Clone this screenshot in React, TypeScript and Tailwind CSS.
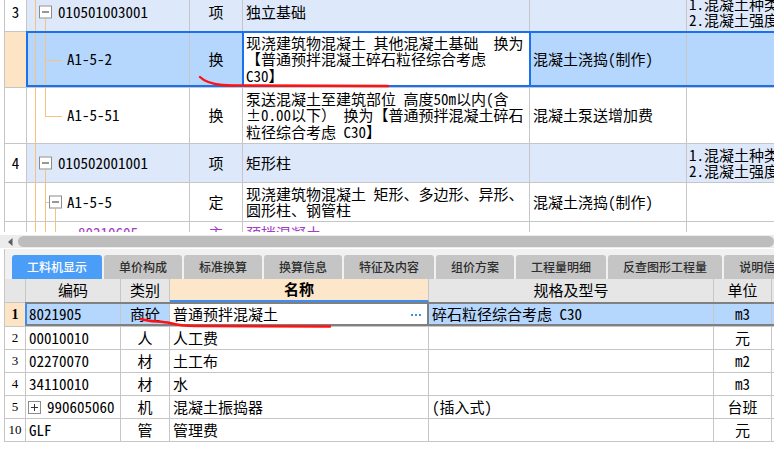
import { memo, ReactNode } from "react";

const FONT = "font-[family-name:'Noto_Sans_Mono_CJK_SC','Noto_Sans_CJK_SC',sans-serif]";
const GRID = "border-[#c6c6c6]";
const CELL = `shrink-0 h-full border-r ${GRID}`;
const SEL = "bg-[#b5d6fd]";
const ITEM = "bg-[#dde9fb]";
const PEACH = "bg-[#fde4c4]";

function Line({ className }: { className: string }) {
    return <span className={`absolute w-px bg-[#f6c27e] ${className}`} />;
}

function Toggle({ className, plus }: { className: string; plus?: boolean }) {
    return (
        <span className={`absolute top-1/2 -translate-y-1/2 w-[13px] h-[13px] border border-[#8c8c8c] bg-white flex items-center justify-center ${className}`}>
            <span className="w-[7px] h-px bg-[#333]" />
            {plus && <span className="absolute w-px h-[7px] bg-[#333]" />}
        </span>
    );
}

type TopRowProps = {
    height: string;
    num?: string;
    tree: ReactNode;
    code: string;
    codePad: string;
    type: string;
    name: ReactNode;
    work?: string;
    feature?: ReactNode;
    kind?: "item" | "selected" | "sub";
    purple?: boolean;
};

function TopRow({ height, num, tree, code, codePad, type, name, work, feature, kind, purple }: TopRowProps) {
    const bg = kind === "item" ? ITEM : kind === "selected" ? SEL : "bg-white";
    const text = purple ? "text-[#a63cc4]" : "text-black";

    return (
        <div className={`relative flex shrink-0 border-b ${GRID} ${height} ${text}`}>
            <div className={`${CELL} w-[22px] flex items-center justify-center ${kind === "selected" ? PEACH : "bg-white"}`}>
                {num}
            </div>
            <div className={`${CELL} w-[163px] relative flex items-center ${bg} ${codePad}`}>
                {tree}
                <span className="relative whitespace-nowrap">{code}</span>
            </div>
            <div className={`${CELL} w-[53px] flex items-center justify-center ${bg}`}>{type}</div>
            <div className={`${CELL} w-[287px] flex items-center pl-[3px] leading-[16.5px] ${kind === "selected" ? "bg-white" : bg}`}>
                <div>{name}</div>
            </div>
            <div className={`${CELL} w-[157px] flex items-center pl-[3px] ${bg}`}>{work}</div>
            <div className={`${CELL} w-[200px] flex items-center pl-[2px] leading-[16px] whitespace-nowrap ${bg}`}>
                <div>{feature}</div>
            </div>

            {kind === "selected" && (
                <>
                    <div className="absolute left-[21px] right-0 -top-px bottom-0 border-2 border-[#1b70ee] pointer-events-none" />
                    <div className="absolute left-[237px] w-[289px] -top-px bottom-0 border-2 border-[#1b70ee] pointer-events-none" />
                </>
            )}
        </div>
    );
}

const feature = (
    <>
        1.混凝土种类<br />2.混凝土强度等级
    </>
);

function TopGrid() {
    return (
        <div className="h-[232px] overflow-hidden">
            <div className={`ml-[4px] border-l ${GRID} -mt-[7px] flex flex-col w-max`}>
                <TopRow
                    height="h-[39px]"
                    num="3"
                    kind="item"
                    codePad="pl-[31px]"
                    tree={(
                        <>
                            <Line className="left-[8px] top-0 bottom-0" />
                            <Line className="left-[18px] top-1/2 bottom-0" />
                            <Toggle className="left-[12px]" />
                        </>
                    )}
                    code="010501003001"
                    type="项"
                    name="独立基础"
                    feature={feature}
                />
                <TopRow
                    height="h-[56px]"
                    kind="selected"
                    codePad="pl-[40px]"
                    tree={(
                        <>
                            <Line className="left-[8px] top-0 bottom-0" />
                            <Line className="left-[18px] top-0 bottom-0" />
                            <span className="absolute left-[18px] w-[17px] h-px top-1/2 bg-[#f6c27e]" />
                        </>
                    )}
                    code="A1-5-2"
                    type="换"
                    name={(
                        <>
                            现浇建筑物混凝土 其他混凝土基础　换为<br />
                            【普通预拌混凝土碎石粒径综合考虑<br />
                            C30】
                        </>
                    )}
                    work="混凝土浇捣(制作)"
                />
                <TopRow
                    height="h-[56px]"
                    kind="sub"
                    codePad="pl-[40px]"
                    tree={(
                        <>
                            <Line className="left-[8px] top-0 bottom-0" />
                            <Line className="left-[18px] top-0 bottom-1/2" />
                            <span className="absolute left-[18px] w-[17px] h-px top-1/2 bg-[#f6c27e]" />
                        </>
                    )}
                    code="A1-5-51"
                    type="换"
                    name={(
                        <>
                            泵送混凝土至建筑部位 高度50m以内(含<br />
                            ±0.00以下）　换为【普通预拌混凝土碎石<br />
                            粒径综合考虑 C30】
                        </>
                    )}
                    work="混凝土泵送增加费"
                />
                <TopRow
                    height="h-[39px]"
                    num="4"
                    kind="item"
                    codePad="pl-[31px]"
                    tree={(
                        <>
                            <Line className="left-[8px] top-0 bottom-0" />
                            <Line className="left-[18px] top-1/2 bottom-0" />
                            <Toggle className="left-[12px]" />
                        </>
                    )}
                    code="010502001001"
                    type="项"
                    name="矩形柱"
                    feature={feature}
                />
                <TopRow
                    height="h-[39px]"
                    kind="sub"
                    codePad="pl-[40px]"
                    tree={(
                        <>
                            <Line className="left-[8px] top-0 bottom-0" />
                            <Line className="left-[18px] top-0 bottom-0" />
                            <Line className="left-[28px] top-1/2 bottom-0" />
                            <span className="absolute left-[18px] w-[5px] h-px top-1/2 bg-[#f6c27e]" />
                            <Toggle className="left-[22px]" />
                        </>
                    )}
                    code="A1-5-5"
                    type="定"
                    name={(
                        <>
                            现浇建筑物混凝土 矩形、多边形、异形、<br />
                            圆形柱、钢管柱
                        </>
                    )}
                    work="混凝土浇捣(制作)"
                />
                <TopRow
                    height="h-[24px]"
                    kind="sub"
                    purple
                    codePad="pl-[51px]"
                    tree={(
                        <>
                            <Line className="left-[8px] top-0 bottom-0" />
                            <Line className="left-[18px] top-0 bottom-0" />
                            <Line className="left-[28px] top-0 bottom-0" />
                        </>
                    )}
                    code="80210605"
                    type="主"
                    name="预拌混凝土"
                />
            </div>
        </div>
    );
}

const tabs = ["工料机显示", "单价构成", "标准换算", "换算信息", "特征及内容", "组价方案", "工程量明细", "反查图形工程量", "说明信息"];

function TabStrip() {
    return (
        <>
            <div className="h-[16px] pt-[3px] bg-white">
                <div className="h-[13px] bg-[#ececec] flex items-center">
                    <svg className="ml-[8px] shrink-0" width="5" height="8" viewBox="0 0 5 8">
                        <path d="M4.5 0 L0 4 L4.5 8 Z" fill="#5c5c5c" />
                    </svg>
                    <div className="ml-[5px] h-[11px] flex-1 rounded-full bg-[#bdbdbd]" />
                </div>
            </div>
            <div className="h-[31px] bg-white pt-px">
                <div className={`h-full ml-[4px] border-l ${GRID} bg-[#f1f1f1] pl-[7px] flex items-end gap-[2px] overflow-hidden`}>
                    {tabs.map((tab, index) => (
                        <div
                            key={tab}
                            className={`shrink-0 h-[24px] px-[15px] rounded-t-[3px] flex items-center text-[12px] font-medium font-['Noto_Sans_CJK_SC',sans-serif] ${index === 0 ? "bg-[#4b9ef8] text-white" : "bg-[#c5c5c5] text-[#2e2e2e]"}`}
                        >
                            {tab}
                        </div>
                    ))}
                </div>
            </div>
        </>
    );
}

const materials = [
    { n: "2", code: "00010010", type: "人", name: "人工费", spec: "", unit: "元" },
    { n: "3", code: "02270070", type: "材", name: "土工布", spec: "", unit: "m2" },
    { n: "4", code: "34110010", type: "材", name: "水", spec: "", unit: "m3" },
    { n: "5", code: "990605060", type: "机", name: "混凝土振捣器", spec: "(插入式)", unit: "台班", expand: true },
    { n: "10", code: "GLF", type: "管", name: "管理费", spec: "", unit: "元" }
];

function MaterialGrid() {
    const cell = `shrink-0 h-full border-r ${GRID} flex items-center`;

    return (
        <div className={`ml-[4px] border-l ${GRID} flex flex-col w-max`}>
            <div className={`flex h-[24px] border-b ${GRID} bg-[#e6e6e6]`}>
                <div className={`${cell} w-[21px]`} />
                <div className={`${cell} w-[95px] justify-center`}>编码</div>
                <div className={`${cell} w-[49px] justify-center`}>类别</div>
                <div className={`${cell} w-[259px] justify-center bg-[#fde7ca] font-bold border-b-2 border-b-[#3d8ef0]`}>名称</div>
                <div className={`${cell} w-[285px] justify-center`}>规格及型号</div>
                <div className={`${cell} w-[58px] justify-center`}>单位</div>
                <div className={`${cell} w-[100px] justify-center`} />
            </div>

            <div className={`relative flex h-[24px] border-b ${GRID}`}>
                <div className={`${cell} w-[21px] justify-center ${PEACH} font-['Liberation_Serif',serif] font-bold text-[14px]`}>1</div>
                <div className={`${cell} w-[95px] pl-[3px] ${SEL}`}>8021905</div>
                <div className={`${cell} w-[49px] justify-center ${SEL}`}>商砼</div>
                <div className={`${cell} w-[259px] pl-[3px] pr-[6px] justify-between bg-white border-r-2 border-r-[#808080]`}>
                    <span>普通预拌混凝土</span>
                    <span className="flex gap-[2px] mt-[1px]">
                        <span className="w-[2px] h-[2px] bg-[#3f8fe0]" />
                        <span className="w-[2px] h-[2px] bg-[#3f8fe0]" />
                        <span className="w-[2px] h-[2px] bg-[#3f8fe0]" />
                    </span>
                </div>
                <div className={`${cell} w-[285px] pl-[3px] ${SEL}`}>碎石粒径综合考虑 C30</div>
                <div className={`${cell} w-[58px] justify-center ${SEL}`}>m3</div>
                <div className={`${cell} w-[100px] ${SEL}`} />
                <div className="absolute left-[20px] right-0 -top-px bottom-0 border-y-2 border-[#808080] border-l-2 border-l-[#3d8ef0] pointer-events-none" />
            </div>

            {materials.map(item => (
                <div key={item.n} className={`flex h-[23px] border-b ${GRID} bg-white`}>
                    <div className={`${cell} w-[21px] justify-center font-['Liberation_Serif',serif] text-[13px]`}>{item.n}</div>
                    <div className={`${cell} w-[95px] ${item.expand ? "pl-[2px]" : "pl-[3px]"}`}>
                        {item.expand && (
                            <span className="relative w-[13px] h-[13px] mr-[6px] border border-[#8c8c8c] bg-white flex items-center justify-center shrink-0">
                                <span className="w-[7px] h-px bg-[#333]" />
                                <span className="absolute w-px h-[7px] bg-[#333]" />
                            </span>
                        )}
                        {item.code}
                    </div>
                    <div className={`${cell} w-[49px] justify-center`}>{item.type}</div>
                    <div className={`${cell} w-[259px] pl-[3px]`}>{item.name}</div>
                    <div className={`${cell} w-[285px] pl-[3px]`}>{item.spec}</div>
                    <div className={`${cell} w-[58px] justify-center`}>{item.unit}</div>
                    <div className={`${cell} w-[100px]`} />
                </div>
            ))}
        </div>
    );
}

function App() {
    return (
        <div className={`relative w-[774px] h-[458px] overflow-hidden bg-white text-[15px] text-black ${FONT}`}>
            <TopGrid />
            <TabStrip />
            <MaterialGrid />

            <svg className="absolute inset-0 pointer-events-none" width="774" height="458" viewBox="0 0 774 458">
                <path
                    d="M200 77 C205 82 212 84 222 85 C232 86 240 85 250 85.5 L388 86"
                    fill="none"
                    stroke="#ff1212"
                    strokeWidth="2.4"
                    strokeLinecap="round"
                />
                <path
                    d="M141 319 C150 322 160 321 170 323 C180 326 188 326 196 326 L330 326.5"
                    fill="none"
                    stroke="#ff1212"
                    strokeWidth="2.4"
                    strokeLinecap="round"
                />
            </svg>
        </div>
    );
}

export default memo(App);
